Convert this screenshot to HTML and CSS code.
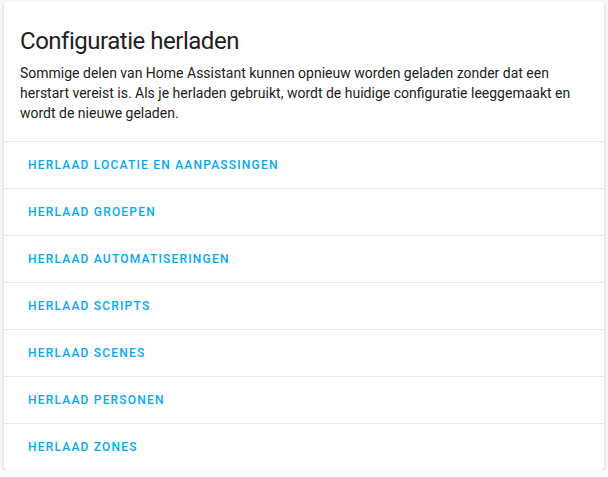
FILE: index.html
```html
<!DOCTYPE html>
<html lang="nl">
<head>
<meta charset="utf-8">
<title>Configuratie herladen</title>
<link rel="stylesheet" href="styles.css">
</head>
<body>
<div class="card">
  <h1 class="card-header">Configuratie herladen</h1>
  <div class="card-content">
    Sommige delen van Home Assistant kunnen opnieuw worden geladen zonder dat een herstart vereist is. Als je herladen gebruikt, wordt de huidige configuratie leeggemaakt en wordt de nieuwe geladen.
  </div>
  <div class="card-actions"><button class="action">Herlaad locatie en aanpassingen</button></div>
  <div class="card-actions"><button class="action">Herlaad groepen</button></div>
  <div class="card-actions"><button class="action">Herlaad automatiseringen</button></div>
  <div class="card-actions"><button class="action">Herlaad scripts</button></div>
  <div class="card-actions"><button class="action">Herlaad scenes</button></div>
  <div class="card-actions"><button class="action">Herlaad personen</button></div>
  <div class="card-actions"><button class="action">Herlaad zones</button></div>
</div>
</body>
</html>
```

FILE: styles.css
```css
html, body {
  margin: 0;
  padding: 0;
}
body {
  background: #fafafa;
  font-family: Roboto, "Noto Sans", sans-serif;
  color: #212121;
  padding: 1px 4px 0;
}
.card {
  width: 600px;
  background: #fff;
  border-radius: 3px;
  box-shadow: 0 2px 2px 0 rgba(0,0,0,.14), 0 1px 5px 0 rgba(0,0,0,.12), 0 3px 1px -2px rgba(0,0,0,.2);
}
.card-header {
  margin: 0;
  padding: 24px 16px 6px;
  font-size: 24px;
  font-weight: 400;
  line-height: 32px;
  letter-spacing: -0.02em;
  color: #212121;
}
.card-content {
  padding: 0 16px 18px;
  font-size: 14px;
  line-height: 20px;
}
.card-actions {
  border-top: 1px solid #e8e8e8;
  padding: 13px 24px 13px;
}
.action {
  display: block;
  border: 0;
  background: none;
  padding: 0;
  margin: 0;
  font-family: Roboto, "Noto Sans", sans-serif;
  font-size: 12px;
  font-weight: 500;
  line-height: 20px;
  letter-spacing: 1.2px;
  text-transform: uppercase;
  color: #03a9f4;
  cursor: pointer;
}
```
